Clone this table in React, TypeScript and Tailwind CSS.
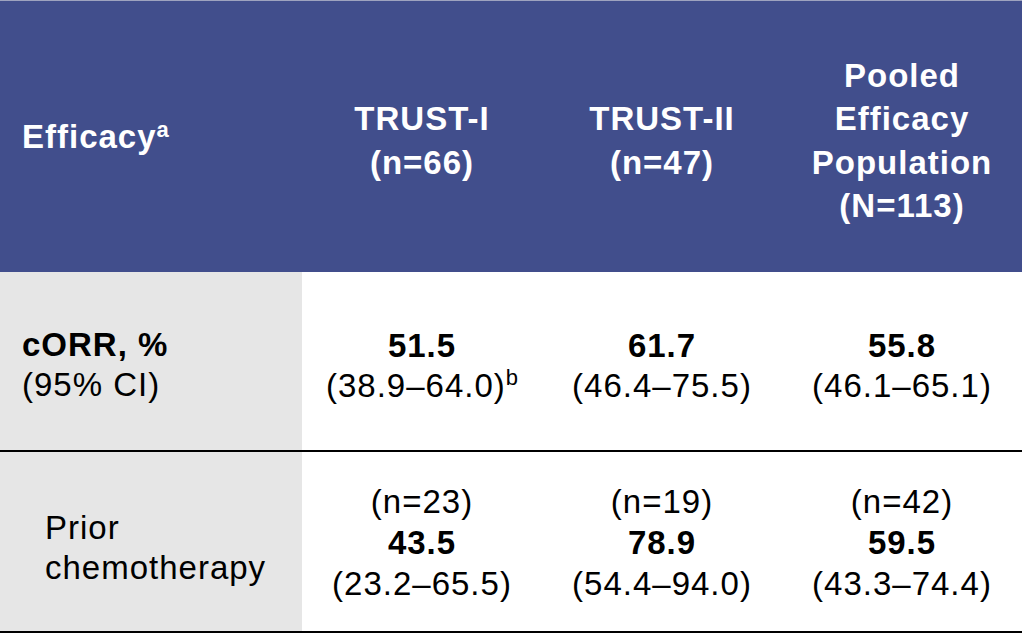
const font = "font-['Liberation_Sans','Arial',sans-serif]";

const cols = [
  { title: ["TRUST-I", "(n=66)"], main: "51.5", ci: "(38.9–64.0)", sup: "b", n: "(n=23)", sub: "43.5", subCi: "(23.2–65.5)" },
  { title: ["TRUST-II", "(n=47)"], main: "61.7", ci: "(46.4–75.5)", n: "(n=19)", sub: "78.9", subCi: "(54.4–94.0)" },
  { title: ["Pooled", "Efficacy", "Population", "(N=113)"], main: "55.8", ci: "(46.1–65.1)", n: "(n=42)", sub: "59.5", subCi: "(43.3–74.4)" },
];

export default function App() {
  return (
    <div className={`w-[1022px] h-[634px] bg-white text-black text-[33px] tracking-[1px] ${font}`}>
      <div className="grid grid-cols-[302px_1fr_1fr_1fr] grid-rows-[272px_180px_181px]">
        {/* header */}
        <div className="bg-[#414e8c] border-t border-[#9ea3bf] flex items-center pl-[22px] text-white font-bold leading-[43px]">
          <span>
            Efficacy<sup className="text-[22px] tracking-normal align-baseline relative -top-[11px]">a</sup>
          </span>
        </div>
        {cols.map((c) => (
          <div
            key={c.title[0]}
            className="bg-[#414e8c] border-t border-[#9ea3bf] flex flex-col items-center justify-center pt-[8px] text-white font-bold leading-[43.5px] text-center"
          >
            {c.title.map((t) => (
              <span key={t}>{t}</span>
            ))}
          </div>
        ))}

        {/* cORR row */}
        <div className="bg-[#e6e6e6] border-b-2 border-black flex flex-col justify-center pl-[22px] pt-[8px] leading-[40px]">
          <span className="font-bold">cORR, %</span>
          <span>(95% CI)</span>
        </div>
        {cols.map((c) => (
          <div key={c.main} className="border-b-2 border-black flex flex-col items-center justify-center pt-[10px] leading-[40px] text-center">
            <span className="font-bold">{c.main}</span>
            <span>
              {c.ci}
              {c.sup && <sup className="text-[22px] tracking-normal align-baseline relative -top-[12px]">{c.sup}</sup>}
            </span>
          </div>
        ))}

        {/* prior chemotherapy row */}
        <div className="bg-[#e6e6e6] border-b-2 border-black flex flex-col justify-center pl-[45px] pt-[12px] leading-[40px]">
          <span>Prior</span>
          <span>chemotherapy</span>
        </div>
        {cols.map((c) => (
          <div key={c.sub} className="border-b-2 border-black flex flex-col items-center justify-center pt-[2px] leading-[41px] text-center">
            <span>{c.n}</span>
            <span className="font-bold">{c.sub}</span>
            <span>{c.subCi}</span>
          </div>
        ))}
      </div>
    </div>
  );
}
